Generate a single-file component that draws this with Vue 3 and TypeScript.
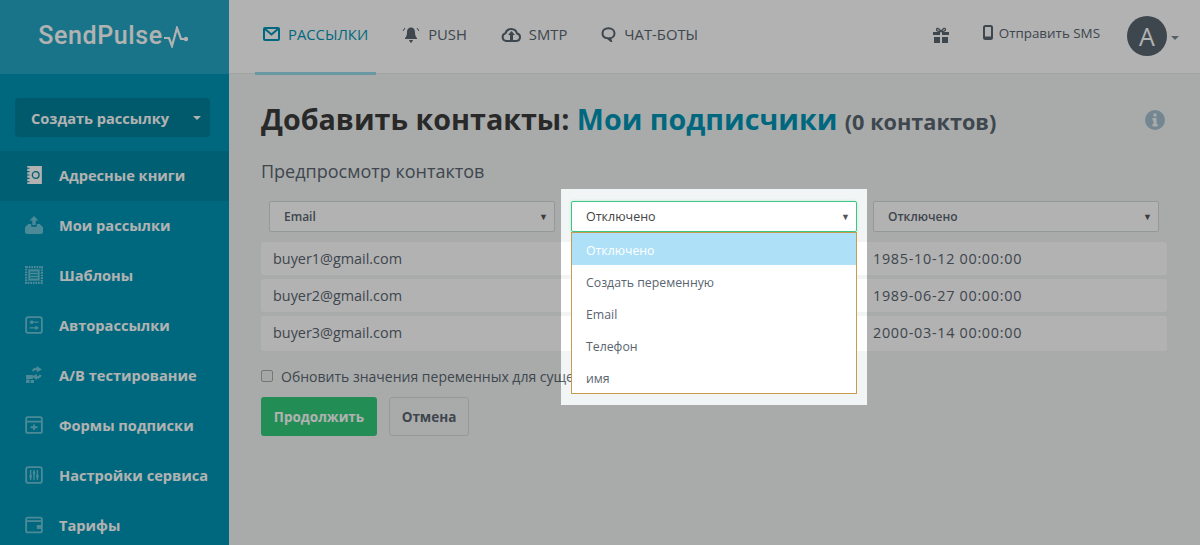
<script setup lang="ts">
import { ref } from 'vue'

interface NavItem {
  label: string
  icon: string
  active?: boolean
}

// each icon is drawn in a 16x16 box
const nav_items: NavItem[] = [
  { label: 'Адресные книги', icon: 'book', active: true },
  { label: 'Мои рассылки', icon: 'send' },
  { label: 'Шаблоны', icon: 'tpl' },
  { label: 'Авторассылки', icon: 'auto' },
  { label: 'A/B тестирование', icon: 'ab' },
  { label: 'Формы подписки', icon: 'form' },
  { label: 'Настройки сервиса', icon: 'prefs' },
  { label: 'Тарифы', icon: 'wallet' },
]

const contacts = [
  { email: 'buyer1@gmail.com', name: '', date: '1985-10-12 00:00:00' },
  { email: 'buyer2@gmail.com', name: '', date: '1989-06-27 00:00:00' },
  { email: 'buyer3@gmail.com', name: '', date: '2000-03-14 00:00:00' },
]

const options = ['Отключено', 'Создать переменную', 'Email', 'Телефон', 'имя']
const selected = ref('Отключено')
</script>

<template>
  <div class="app">
    <aside class="sidebar">
      <div class="logo">
        <span class="logo_text">SendPulse</span>
        <svg class="pulse" width="25" height="22" viewBox="0 0 25 22">
          <path d="M0 12h5l3 8 5-18 4 11h4" fill="none" stroke="#fff" stroke-width="2.200" />
          <circle cx="22" cy="13" r="2.200" fill="#fff" />
        </svg>
      </div>

      <div class="create_wrap">
        <button class="create_btn">
          <span>Создать рассылку</span>
          <i class="caret"></i>
        </button>
      </div>

      <ul class="nav">
        <li v-for="item in nav_items" :key="item.label" :class="{ active: item.active }">
          <svg class="nav_icon" width="18" height="18" viewBox="0 0 16 16">
            <template v-if="item.icon === 'book'">
              <path class="fill" d="M2 0h13v16H2z" />
              <path class="cut" d="M0 2h4M0 5h4M0 8h4M0 11h4M0 14h4" />
              <circle class="cut_thin" cx="9.500" cy="8" r="3" />
            </template>
            <template v-else-if="item.icon === 'send'">
              <path class="fill" d="M0 10l3-3h2.500v2.500h5V7H13l3 3v4a2 2 0 0 1-2 2H2a2 2 0 0 1-2-2z" />
              <path class="fill" d="M8 0l4 4H9.500v4h-3V4H4z" />
            </template>
            <template v-else-if="item.icon === 'tpl'">
              <path class="line" d="M1 1h14v14H1z" stroke-width="2" stroke-dasharray="1.500 .8" />
              <path class="fill" d="M3 3h10v10H3z" />
              <path class="cut_thin" d="M4.500 5.500h7M4.500 8h7M4.500 10.500h7" />
            </template>
            <template v-else-if="item.icon === 'auto'">
              <rect class="line" x="1" y="1" width="14" height="14" rx="2" stroke-width="1.600" />
              <path class="line" d="M4 5.500h8M4 10.500h8" stroke-width="1.200" />
              <path class="fill" d="M5 4h2v3H5zM9 9h2v3H9z" />
            </template>
            <template v-else-if="item.icon === 'ab'">
              <path class="fill" d="M1 8h6v3.500H1zM1 12h3v3H1zM5 12.500h3V15H5z" />
              <path class="line" d="M7 4.500C8 2.500 10 2 12 3M14 8c-1 2.200-3 2.700-5 1.700" stroke-width="2" />
              <path class="fill" d="M10.500 0L15 3.200l-4.500 2.300zM10.500 12.500L6 9.300 10.500 7z" />
            </template>
            <template v-else-if="item.icon === 'form'">
              <rect class="line" x="1" y="1" width="14" height="14" rx="1.500" stroke-width="1.600" />
              <path class="line" d="M1 5h14M5 10h6M8 7.500v5" stroke-width="1.600" />
            </template>
            <template v-else-if="item.icon === 'prefs'">
              <rect class="line" x="1" y="1" width="14" height="14" rx="2" stroke-width="1.600" />
              <path class="line" d="M5 3.500v9M8 3.500v9M11 3.500v9" stroke-width="1.200" />
              <path class="fill" d="M4 8h2v2.500H4zM7 5h2v2.500H7zM10 8h2v2.500h-2z" />
            </template>
            <template v-else>
              <rect class="line" x="1" y="1.500" width="14" height="13" rx="1.500" stroke-width="1.600" />
              <path class="line" d="M1 4.500h14" stroke-width="1.600" />
              <path class="fill" d="M10.500 8H15v3.500h-4.500z" />
            </template>
          </svg>
          <span>{{ item.label }}</span>
        </li>
      </ul>
    </aside>

    <div class="content">
      <header class="topbar">
        <nav class="tabs">
          <a class="tab tab_active">
            <svg width="17" height="14" viewBox="0 0 17 14">
              <rect x="1" y="1" width="15" height="12" rx="1" fill="none" stroke="currentColor" stroke-width="2" />
              <path d="M2 2l6.500 5.500L15 2" fill="none" stroke="currentColor" stroke-width="2" />
            </svg>
            РАССЫЛКИ
          </a>
          <a class="tab">
            <svg width="18" height="17" viewBox="0 0 18 17">
              <path d="M9 1.500c3 0 4 2.500 4 5 0 3 1 4.500 2 5.500v1H3v-1c1-1 2-2.500 2-5.500 0-2.500 1-5 4-5z" fill="currentColor" />
              <path d="M7.500 14.500h3L9 16.500zM3 2L1 5M15 2l2 3" fill="currentColor" stroke="currentColor" stroke-width="1" />
            </svg>
            PUSH
          </a>
          <a class="tab">
            <svg width="20" height="15" viewBox="0 0 20 15">
              <path d="M5 14a4 4 0 0 1-.5-7.800A6 6 0 0 1 16 6.500 3.800 3.800 0 0 1 15.500 14z" fill="none" stroke="currentColor" stroke-width="2" />
              <path d="M10.500 4l3.500 4h-2v5H9V8H7z" fill="currentColor" />
            </svg>
            SMTP
          </a>
          <a class="tab">
            <svg width="15" height="15" viewBox="0 0 15 15">
              <path d="M7.500 1.200c3.500 0 6 2.200 6 5s-2 4.800-4.500 5l1 2.800-3.200-2.800c-3-.2-5.300-2-5.300-5s2.500-5 6-5z" fill="none" stroke="currentColor" stroke-width="2" />
            </svg>
            ЧАТ-БОТЫ
          </a>
        </nav>

        <div class="top_right">
          <svg class="gift" width="16" height="16" viewBox="0 0 16 16">
            <path d="M0 5h7v3H0zM9 5h7v3H9zM1 10h6v6H1zM9 10h6v6H9z" fill="currentColor" />
            <path d="M8 4.500C6 1 3.500.500 3.500 2.500S6 4.500 8 4.500c2 0 4.500 0 4.500-2S10 1 8 4.500z" fill="none" stroke="currentColor" stroke-width="1.300" />
          </svg>
          <span class="sms">
            <svg width="10" height="15" viewBox="0 0 10 15">
              <rect x="1" y="1" width="8" height="13" rx="1.500" fill="none" stroke="currentColor" stroke-width="2" />
              <path d="M1 11.500h8v2.500H1z" fill="currentColor" />
            </svg>
            Отправить SMS
          </span>
          <span class="avatar">A</span>
          <i class="caret caret_user"></i>
        </div>
      </header>

      <main class="page">
        <div class="title_row">
          <h1>Добавить контакты: <span class="book_name">Мои подписчики</span> <small>(0 контактов)</small></h1>
          <svg class="info" width="20" height="20" viewBox="0 0 20 20">
            <circle cx="10" cy="10" r="10" fill="#a6c0d2" />
            <path d="M8.500 3.500h3v3h-3zM7.500 8h4v6h1.200v2.500H7.500V14h1v-3.500h-1z" fill="#f2f5f5" />
          </svg>
        </div>

        <h2>Предпросмотр контактов</h2>

        <div class="col_selects">
          <div class="fake_select"><span>Email</span><b>▼</b></div>
          <div class="fake_select focused">
            <span>{{ selected }}</span><b>▼</b>
            <ul class="menu">
              <li v-for="(opt, i) in options" :key="opt" :class="{ hover: i === 0 }">{{ opt }}</li>
            </ul>
          </div>
          <div class="fake_select"><span>Отключено</span><b>▼</b></div>
        </div>

        <div class="rows">
          <div v-for="c in contacts" :key="c.email" class="row">
            <div>{{ c.email }}</div>
            <div>{{ c.name }}</div>
            <div class="date">{{ c.date }}</div>
          </div>
        </div>

        <label class="update_row">
          <i class="check"></i>
          <span>Обновить значения переменных для существующих контактов</span>
        </label>

        <div class="actions">
          <button class="btn btn_go">Продолжить</button>
          <button class="btn btn_cancel">Отмена</button>
        </div>
      </main>
    </div>

    <!-- tour overlay, the hole stays bright -->
    <div class="spotlight"></div>
  </div>
</template>

<style>
html, body {
  margin: 0;
  overflow: hidden;
}
</style>

<style scoped>
.app {
  position: relative;
  display: flex;
  width: 1200px;
  height: 545px;
  overflow: hidden;
  background: #f2f5f5;
  color: #5a6570;
  font-family: "Open Sans", "Noto Sans", sans-serif;
}

/* sidebar */
.sidebar {
  flex: none;
  width: 229px;
  background: #0096b5;
  color: #fff;
}
.logo {
  display: flex;
  align-items: center;
  justify-content: center;
  gap: 1px;
  height: 74px;
  padding: 0 2px 3px 0;
  box-sizing: border-box;
  background: #25a7c4;
}
.logo_text {
  font-family: Roboto, sans-serif;
  font-size: 25px;
  font-weight: 500;
  letter-spacing: .6px;
}
.pulse {
  margin-top: 2px;
}
.create_wrap {
  padding: 24px 19px 14px 15px;
}
.create_btn {
  display: flex;
  align-items: center;
  justify-content: space-between;
  width: 100%;
  height: 39px;
  padding: 0 9px 0 16px;
  border: none;
  border-radius: 4px;
  background: #00819a;
  color: #fff;
  font-family: inherit;
  font-size: 14.600px;
  font-weight: 700;
}
.caret {
  display: block;
  width: 0;
  height: 0;
  border-left: 4px solid transparent;
  border-right: 4px solid transparent;
  border-top: 4px solid currentColor;
}
.nav {
  list-style: none;
  margin: 0;
  padding: 0;
}
.nav li {
  display: flex;
  align-items: center;
  gap: 16px;
  height: 50px;
  box-sizing: border-box;
  padding: 0 0 2px 25px;
  font-size: 14.600px;
  font-weight: 700;
}
.nav li.active {
  background: #0088a4;
}
.nav_icon {
  flex: none;
}
.nav_icon .fill {
  fill: #6fc6da;
}
.nav_icon .line {
  fill: none;
  stroke: #6fc6da;
}
.nav_icon .cut {
  fill: none;
  stroke: #0088a4;
  stroke-width: 1;
}
.nav_icon .cut_thin {
  fill: none;
  stroke: #0096b5;
  stroke-width: 1.200;
}
.nav li.active .nav_icon .fill {
  fill: #fff;
}
.nav li.active .nav_icon .cut_thin {
  stroke: #0088a4;
}

/* top bar */
.content {
  flex: 1;
  min-width: 0;
}
.topbar {
  display: flex;
  justify-content: space-between;
  height: 74px;
  box-sizing: border-box;
  padding-left: 26px;
  background: #fff;
  border-bottom: 1px solid #e8ebeb;
}
.tabs {
  display: flex;
}
.tab {
  display: flex;
  align-items: center;
  gap: 8px;
  height: 75px;
  box-sizing: border-box;
  padding: 0 8px 4px;
  margin-right: 18px;
  font-size: 14.800px;
  font-weight: 500;
  white-space: nowrap;
  border-bottom: 3px solid transparent;
}
.tab_active {
  color: #0096b5;
  border-bottom-color: #97d8e8;
}
.top_right {
  display: flex;
  align-items: center;
  padding: 0 21px 2px 0;
}
.gift {
  margin: 0 34px 2px 0;
}
.sms {
  display: flex;
  align-items: center;
  gap: 6px;
  font-size: 13.400px;
  margin-right: 27px;
  padding-bottom: 6px;
}
.avatar {
  display: flex;
  align-items: center;
  justify-content: center;
  width: 40px;
  height: 40px;
  border-radius: 50%;
  background: #5a6570;
  color: #fff;
  font-size: 25px;
}
.caret_user {
  margin: 4px 0 0 4px;
  color: #7a8a96;
}

/* page */
.page {
  padding: 23px 33px 0 32px;
}
.title_row {
  display: flex;
  justify-content: space-between;
  align-items: center;
  height: 42px;
}
h1 {
  margin: 0;
  font-size: 28.700px;
  font-weight: 700;
  color: #3c3c3c;
  white-space: nowrap;
}
.book_name {
  color: #0096b5;
}
small {
  font-size: 21.700px;
  color: #5a6570;
}
.info {
  margin: 4px 2px 0 0;
}
h2 {
  margin: 20px 0 18px;
  font-size: 18px;
  line-height: 24px;
  font-weight: 400;
}
.col_selects {
  display: grid;
  grid-template-columns: repeat(3, 1fr);
  gap: 16px;
  padding: 0 8px;
  margin-bottom: 10px;
}
.fake_select {
  position: relative;
  display: flex;
  align-items: center;
  justify-content: space-between;
  height: 31px;
  box-sizing: border-box;
  padding: 0 6px 0 14px;
  border: 1px solid #d3dcdc;
  border-radius: 2px;
  background: #fff;
  font-size: 12px;
  font-weight: 600;
}
.fake_select b {
  font-size: 9px;
  font-weight: 400;
  color: #555;
}
.focused {
  border-color: #3cc583;
  box-shadow: 0 0 3px #b7ecd2;
  color: #444;
  font-weight: 500;
  font-size: 12.500px;
  z-index: 2;
}
.menu {
  position: absolute;
  left: -1px;
  right: -1px;
  top: 30px;
  margin: 0;
  padding: 0;
  list-style: none;
  border: 1px solid #c99c4d;
  background: #fff;
  font-size: 12.300px;
  font-weight: 400;
  color: #5a6570;
}
.menu li {
  height: 32px;
  box-sizing: border-box;
  padding: 2px 0 0 14px;
  line-height: 32px;
}
.menu .hover {
  background: #aee0f7;
  color: #fff;
}
.row {
  display: grid;
  grid-template-columns: repeat(3, 1fr);
  height: 33px;
  margin-bottom: 4px;
  border-radius: 3px;
  background: #fff;
  font-size: 14.400px;
  line-height: 33px;
}
.row:last-child {
  height: 35px;
  margin-bottom: 0;
}
.row > div {
  padding-left: 12px;
}
.row > .date {
  padding-left: 8px;
  letter-spacing: .7px;
}
.update_row {
  display: flex;
  align-items: center;
  gap: 8px;
  margin-top: 15px;
  height: 20px;
  font-size: 14px;
  white-space: nowrap;
}
.check {
  width: 10px;
  height: 10px;
  border: 1px solid #aaa;
  border-radius: 2px;
  background: #eee;
}
.actions {
  display: flex;
  gap: 12px;
  margin-top: 11px;
}
.btn {
  height: 39px;
  border-radius: 3px;
  font-family: inherit;
  font-size: 13.500px;
  font-weight: 700;
}
.btn_go {
  width: 116px;
  border: none;
  background: #33cb7c;
  color: #fff;
}
.btn_cancel {
  width: 80px;
  border: 1px solid #d3dcdc;
  background: transparent;
  color: #5a6570;
}

.spotlight {
  position: absolute;
  left: 561px;
  top: 189px;
  width: 306px;
  height: 216px;
  box-shadow: 0 0 0 1300px rgba(0, 0, 0, .3);
  pointer-events: none;
  z-index: 5;
}
</style>
